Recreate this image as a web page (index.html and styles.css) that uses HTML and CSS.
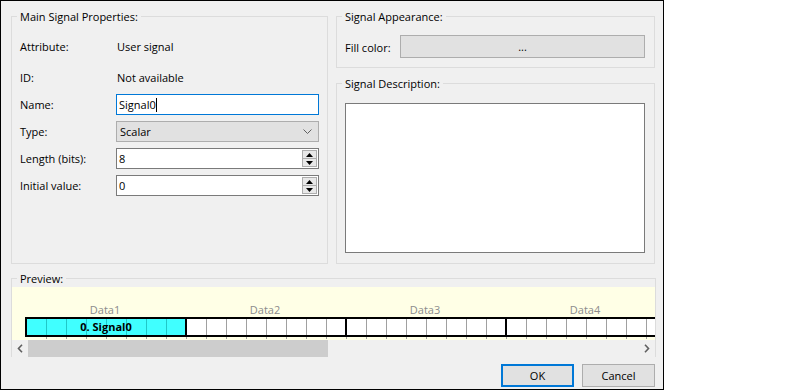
FILE: index.html
```html
<!DOCTYPE html>
<html>
<head>
<meta charset="utf-8">
<link rel="stylesheet" href="styles.css">
</head>
<body>
<div class="dialog">
  <div class="top">
    <fieldset class="group main">
      <legend>Main Signal Properties:</legend>
      <div class="form">
        <div class="row info"><span class="lbl">Attribute:</span><span class="val">User signal</span></div>
        <div class="row info gap"><span class="lbl">ID:</span><span class="val">Not available</span></div>
        <div class="row"><span class="lbl">Name:</span><div class="edit focus"><span>Signal0</span><span class="caret"></span></div></div>
        <div class="row"><span class="lbl">Type:</span><div class="combo"><span>Scalar</span><svg class="chev" width="9" height="6" viewBox="0 0 9 6"><polyline points="0.5,0.5 4.5,4.5 8.5,0.5" fill="none" stroke="#606060" stroke-width="1"/></svg></div></div>
        <div class="row"><span class="lbl">Length (bits):</span><div class="edit num"><span>8</span><div class="spin"><div class="sb"><svg width="7" height="4" viewBox="0 0 7 4"><polygon points="3.5,0 7,4 0,4" fill="#000"/></svg></div><div class="sb"><svg width="7" height="4" viewBox="0 0 7 4"><polygon points="0,0 7,0 3.5,4" fill="#000"/></svg></div></div></div></div>
        <div class="row"><span class="lbl">Initial value:</span><div class="edit num"><span>0</span><div class="spin"><div class="sb"><svg width="7" height="4" viewBox="0 0 7 4"><polygon points="3.5,0 7,4 0,4" fill="#000"/></svg></div><div class="sb"><svg width="7" height="4" viewBox="0 0 7 4"><polygon points="0,0 7,0 3.5,4" fill="#000"/></svg></div></div></div></div>
      </div>
    </fieldset>
    <div class="rightcol">
      <fieldset class="group appearance">
        <legend>Signal Appearance:</legend>
        <div class="fillrow"><span class="fill-lbl">Fill color:</span><div class="btn fillbtn">...</div></div>
      </fieldset>
      <fieldset class="group desc">
        <legend>Signal Description:</legend>
        <div class="memo"></div>
      </fieldset>
    </div>
  </div>
  <fieldset class="group preview">
    <legend>Preview:</legend>
    <div class="canvas">
      <div class="labels"><span>Data1</span><span>Data2</span><span>Data3</span><span>Data4</span></div>
      <div class="strip">
        <div class="byte sig">0. Signal0</div>
        <div class="byte"></div>
        <div class="byte"></div>
        <div class="byte"></div>
      </div>
      <div class="ticks"></div>
    </div>
    <div class="hscroll">
      <div class="arrow"><svg width="6" height="9" viewBox="0 0 6 9"><polyline points="5,0.8 1.5,4.5 5,8.2" fill="none" stroke="#606060" stroke-width="1.6"/></svg></div>
      <div class="thumb"></div>
      <div class="track"></div>
      <div class="arrow"><svg width="6" height="9" viewBox="0 0 6 9"><polyline points="1,0.8 4.5,4.5 1,8.2" fill="none" stroke="#606060" stroke-width="1.6"/></svg></div>
    </div>
  </fieldset>
  <div class="buttons">
    <div class="btn dlgbtn default">OK</div>
    <div class="btn dlgbtn">Cancel</div>
  </div>
</div>
</body>
</html>
```

FILE: styles.css
```css
* { box-sizing: border-box; }
html, body { margin: 0; padding: 0; background: #fff; }
body {
  font-family: "Open Sans", "Noto Sans", sans-serif;
  font-size: 11px;
  color: #000;
}
.dialog {
  width: 664px;
  height: 390px;
  border: 1px solid #000;
  background: #f0f0f0;
  padding: 7px 8px 0 10px;
  display: flex;
  flex-direction: column;
}
.top {
  display: flex;
  gap: 8px;
  align-items: stretch;
}
.group {
  margin: 0;
  border: 1px solid #dcdcdc;
  min-width: 0;
}
.group legend {
  padding: 0 3px;
  margin-left: -3px;
  line-height: 17px;
  height: 16px;
}
.main {
  width: 318px;
  padding: 12px 8px 0 8px;
}
.form {
  display: flex;
  flex-direction: column;
  gap: 6px;
}
.row {
  display: flex;
  align-items: center;
  height: 21px;
}
.row.gap { margin-top: 4px; }
.lbl { width: 96px; flex: none; }
.val { padding-left: 1px; }
.edit {
  width: 204px;
  height: 21px;
  background: #fff;
  border: 1px solid #7a7a7a;
  display: flex;
  align-items: center;
  padding-left: 2px;
}
.edit.focus { border-color: #0078d7; }
.caret {
  width: 1px;
  height: 14px;
  background: #000;
}
.combo {
  width: 204px;
  height: 21px;
  background: #e1e1e1;
  border: 1px solid #adadad;
  display: flex;
  align-items: center;
  justify-content: space-between;
  padding: 0 6px 0 3px;
}
.chev { display: block; }
.num { justify-content: space-between; padding-right: 1px; }
.spin {
  width: 15px;
  height: 17px;
  border: 1px solid #adadad;
  background: #e8e8e8;
  display: flex;
  flex-direction: column;
}
.sb {
  flex: 1;
  display: flex;
  align-items: center;
  justify-content: center;
}
.sb + .sb { border-top: 1px solid #adadad; }
.sb svg { display: block; }

.rightcol {
  width: 319px;
  display: flex;
  flex-direction: column;
  gap: 7px;
}
.appearance {
  padding: 11px 9px 9px 8px;
}
.fillrow {
  display: flex;
  align-items: center;
}
.fill-lbl { width: 55px; flex: none; padding-top: 2px; }
.btn {
  background: #e1e1e1;
  border: 1px solid #adadad;
  display: flex;
  align-items: center;
  justify-content: center;
}
.fillbtn { width: 245px; height: 23px; }
.desc {
  padding: 12px 9px 10px 8px;
}
.memo {
  width: 300px;
  height: 150px;
  background: #fff;
  border: 1px solid #7a7a7a;
}

.preview {
  margin-top: 6px;
  padding: 1px 0 0 0;
  border-bottom: none;
  width: 645px;
}
.preview legend { margin-left: 5px; }
.canvas {
  height: 53px;
  background: #ffffe6;
  overflow: hidden;
  padding-top: 15px;
}
.labels {
  display: flex;
  margin-left: 13px;
  height: 15px;
  line-height: 16px;
  color: #8c8c8c;
}
.labels span {
  flex: 0 0 160px;
  text-align: center;
}
.strip {
  display: flex;
  margin-left: 13px;
  width: 700px;
  height: 20px;
  border-top: 2px solid #000;
  border-bottom: 2px solid #000;
}
.byte {
  flex: 0 0 160px;
  border-left: 2px solid #000;
  background-color: #fff;
  background-image: repeating-linear-gradient(to right, transparent 0 19px, #a0a0a0 19px 20px);
}
.byte.sig {
  background-color: #40ffff;
  background-image: repeating-linear-gradient(to right, transparent 0 19px, #20c8c8 19px 20px);
  font-weight: bold;
  display: flex;
  align-items: center;
  justify-content: center;
  line-height: 16px;
}
.ticks {
  margin-left: 34px;
  height: 2px;
  background-image: repeating-linear-gradient(to right, #a0a0a0 0 1px, transparent 1px 20px);
}
.hscroll {
  display: flex;
  height: 17px;
  background: #f0f0f0;
}
.arrow {
  width: 16px;
  display: flex;
  align-items: center;
  justify-content: center;
}
.arrow svg { display: block; }
.thumb {
  width: 300px;
  background: #cdcdcd;
}
.track { flex: 1; }

.buttons {
  display: flex;
  justify-content: flex-end;
  gap: 8px;
  margin-top: 7px;
}
.dlgbtn {
  width: 73px;
  height: 23px;
}
.dlgbtn.default {
  border: 1px solid #0078d7;
  box-shadow: inset 0 0 0 1px #0078d7;
}
```
